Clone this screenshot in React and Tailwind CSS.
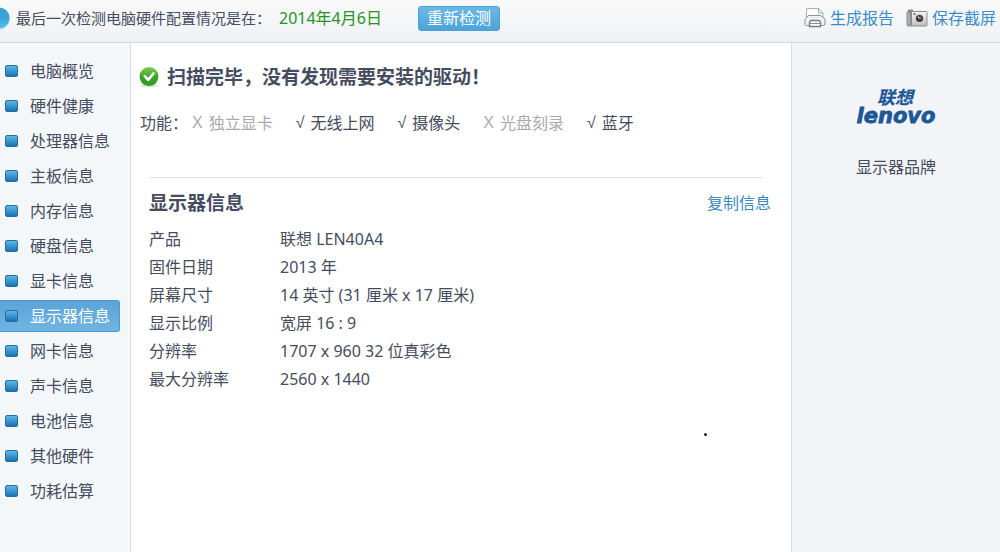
import React from "react";

const menu = [
  "电脑概览",
  "硬件健康",
  "处理器信息",
  "主板信息",
  "内存信息",
  "硬盘信息",
  "显卡信息",
  "显示器信息",
  "网卡信息",
  "声卡信息",
  "电池信息",
  "其他硬件",
  "功耗估算",
];

const features = [
  { name: "独立显卡", ok: false },
  { name: "无线上网", ok: true },
  { name: "摄像头", ok: true },
  { name: "光盘刻录", ok: false },
  { name: "蓝牙", ok: true },
];

const details = [
  ["产品", "联想 LEN40A4"],
  ["固件日期", "2013 年"],
  ["屏幕尺寸", "14 英寸 (31 厘米 x 17 厘米)"],
  ["显示比例", "宽屏 16 : 9"],
  ["分辨率", "1707 x 960 32 位真彩色"],
  ["最大分辨率", "2560 x 1440"],
];

function InfoIcon() {
  return (
    <svg width="10" height="24" viewBox="0 0 10 24" className="shrink-0" aria-hidden="true">
      <defs>
        <linearGradient id="info" x1="0" y1="0" x2="0" y2="1">
          <stop offset="0" stopColor="#3f9bd0" />
          <stop offset="0.5" stopColor="#3aa5dc" />
          <stop offset="1" stopColor="#56c0ef" />
        </linearGradient>
      </defs>
      <circle cx="-1" cy="13" r="11" fill="#d3e3ec" />
      <circle cx="-1" cy="12" r="10.5" fill="url(#info)" />
    </svg>
  );
}

function PrinterIcon() {
  return (
    <svg width="22" height="22" viewBox="0 0 22 22" fill="none" aria-hidden="true">
      <path d="M2.5 12V1.5h12L19 6v5" fill="#fbfdfd" stroke="#a3b2b8" />
      <path d="M14.5 1.5V6H19" stroke="#7fb7bd" />
      <path
        d="M4.5 8.5h12L20 11c.6.5 1 1 1 1.8V17c0 1-.6 1.5-1.5 1.5h-17c-.9 0-1.5-.5-1.5-1.5v-4.2c0-.8.3-1.3 1-1.8z"
        fill="#eef0f1"
        stroke="#8c9196"
      />
      <path d="M5.5 19.5V15L7 13.5h8l1.5 1.5v4.5z" fill="#fff" stroke="#777c82" strokeWidth="1.3" />
      <path d="M6 16.5h10" stroke="#8a8e93" />
    </svg>
  );
}

function CameraIcon() {
  return (
    <svg width="22" height="20" viewBox="0 0 22 20" aria-hidden="true">
      <defs>
        <linearGradient id="camera" x1="0" y1="0" x2="0" y2="1">
          <stop offset="0" stopColor="#fafafa" />
          <stop offset="1" stopColor="#bcbcbc" />
        </linearGradient>
      </defs>
      <rect x="2" y="1.5" width="5" height="3" fill="#8a8a8a" />
      <rect x="1" y="3.5" width="20" height="14.5" rx="1" fill="url(#camera)" stroke="#8e8e8e" />
      <rect x="1.5" y="4" width="4.5" height="13.5" fill="#8b8b8b" />
      <path d="M3 5v11.5" stroke="#cfcfcf" />
      <rect x="7.5" y="5" width="2" height="2" fill="#777" />
      <circle cx="13.5" cy="10.5" r="5" fill="#d5d5d5" />
      <circle cx="13.5" cy="10.5" r="3.6" fill="#3d3436" />
      <circle cx="14" cy="10" r="1.5" fill="#8d6f79" />
      <circle cx="12.5" cy="9.3" r=".7" fill="#fff" />
    </svg>
  );
}

function CheckIcon() {
  return (
    <svg width="20" height="22" viewBox="0 0 20 22" className="shrink-0" aria-hidden="true">
      <defs>
        <linearGradient id="check" x1="0" y1="0" x2="0" y2="1">
          <stop offset="0" stopColor="#79cf4d" />
          <stop offset="0.55" stopColor="#3da32b" />
          <stop offset="1" stopColor="#2f9a22" />
        </linearGradient>
      </defs>
      <ellipse cx="10" cy="19.5" rx="8" ry="1.8" fill="#cfe3c9" />
      <circle cx="10" cy="10.5" r="9.5" fill="url(#check)" />
      <path
        d="M5.8 10.2l3.4 3.6 5.2-6.3"
        fill="none"
        stroke="#fff"
        strokeWidth="2.6"
        strokeLinecap="round"
        strokeLinejoin="round"
      />
    </svg>
  );
}

function Bullet() {
  return (
    <span className="h-3 w-[13px] shrink-0 rounded-xs border border-[#2b6c9c] bg-linear-to-b from-[#5ab9e6] to-[#1673b4]" />
  );
}

function LenovoLogo() {
  return (
    <svg width="92" height="52" viewBox="0 -10 92 52" role="img" aria-label="联想 lenovo">
      <g fill="#1d5796" stroke="#1d5796" fontWeight="bold" fontStyle="italic" textAnchor="middle">
        <text x="45" y="15" fontSize="18" strokeWidth="0.2" fontFamily="'Noto Sans CJK SC', sans-serif">
          联想
        </text>
        <text x="46" y="34" fontSize="21" strokeWidth="0.8" fontFamily="'DejaVu Sans', sans-serif">
          lenovo
        </text>
      </g>
    </svg>
  );
}

export default function App() {
  return (
    <div
      lang="zh-CN"
      className="flex min-h-screen flex-col bg-white font-['Noto_Sans','Noto_Sans_CJK_SC',sans-serif] text-base text-[#464c60]"
    >
      {/* Top bar */}
      <header className="flex h-[43px] items-center border-b border-[#d3d6de] bg-linear-to-b from-[#fafafa] to-[#eef1f5] pb-1.5 whitespace-nowrap">
        <InfoIcon />
        <p className="ml-1.5 flex items-center gap-2 text-[15px]">
          最后一次检测电脑硬件配置情况是在：
          <time dateTime="2014-04-06" className="text-base text-[#289228]">
            2014年4月6日
          </time>
        </p>
        <button
          type="button"
          className="ml-9 h-[25px] rounded-[3px] border border-[#4a9fd3] bg-linear-to-b from-[#6bb9e4] to-[#4ca4da] px-2 leading-5 text-white"
        >
          重新检测
        </button>
        <nav className="ml-auto flex gap-3 pr-1 text-[#3d8cc8]">
          <a href="#report" className="flex items-center gap-1">
            <PrinterIcon />
            生成报告
          </a>
          <a href="#capture" className="flex items-center gap-1">
            <CameraIcon />
            保存截屏
          </a>
        </nav>
      </header>

      <div className="flex flex-1">
        {/* Sidebar */}
        <aside className="w-[131px] shrink-0 border-r border-[#d9dde2] bg-[#f3f7fa] pt-3">
          <ul className="flex flex-col gap-[3px] pr-2.5">
            {menu.map((item) => (
              <li key={item}>
                <a
                  href="#item"
                  className={
                    item === "显示器信息"
                      ? "flex h-8 items-center gap-3 rounded-r-[3px] border border-l-0 border-[#4a99d0] bg-linear-to-b from-[#5ba4d6] to-[#70b5e2] pl-[5px] text-white"
                      : "flex h-8 items-center gap-3 pl-[5px]"
                  }
                >
                  <Bullet />
                  {item}
                </a>
              </li>
            ))}
          </ul>
        </aside>

        <main className="flex min-w-0 flex-1 flex-col pt-5 pr-5 pl-2">
          <h1 className="flex items-center gap-2 text-[19px] leading-7 font-bold">
            <CheckIcon />
            扫描完毕，没有发现需要安装的驱动！
          </h1>

          <div className="mt-5 flex items-center pl-px leading-6 whitespace-nowrap">
            <span>功能：</span>
            <ul className="ml-1 flex gap-[23px]">
              {features.map((f) => (
                <li
                  key={f.name}
                  className={f.ok ? "flex gap-1.5" : "flex gap-1.5 text-[#aaaaaa]"}
                >
                  <span className="font-['Liberation_Sans',sans-serif]">{f.ok ? "√" : "X"}</span>
                  {f.name}
                </li>
              ))}
            </ul>
          </div>

          {/* Monitor details */}
          <section className="mt-[42px] pl-2.5">
            <hr className="mr-2 border-[#e2e2e4]" />
            <div className="mt-[11px] flex items-center justify-between">
              <h2 className="text-[19px] leading-7 font-bold">显示器信息</h2>
              <a href="#copy" className="text-[#3f88bd]">
                复制信息
              </a>
            </div>
            <table className="mt-2 w-full table-fixed text-left leading-7">
              <tbody>
                {details.map(([label, value]) => (
                  <tr key={label}>
                    <th scope="row" className="w-[131px] p-0 font-normal">
                      {label}
                    </th>
                    <td className="p-0">{value}</td>
                  </tr>
                ))}
              </tbody>
            </table>
          </section>

          <span className="mt-10 mr-16 size-[3px] self-end rounded-full bg-[#1c1c30]" />
        </main>

        {/* Brand panel */}
        <aside className="flex w-[209px] shrink-0 flex-col items-center border-l border-[#d5dde4] bg-[#f2f4f8] pt-9">
          <LenovoLogo />
          <p className="mt-6">显示器品牌</p>
        </aside>
      </div>
    </div>
  );
}
